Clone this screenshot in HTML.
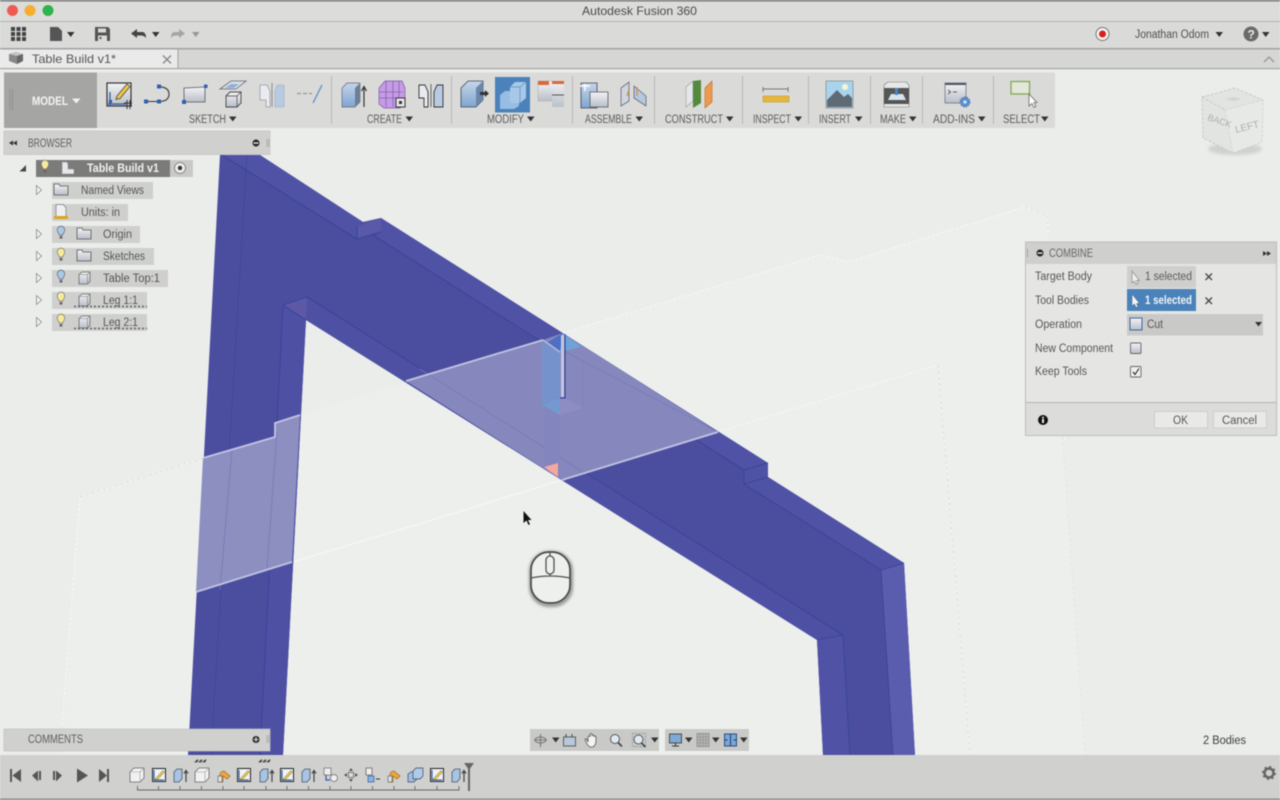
<!DOCTYPE html>
<html><head><meta charset="utf-8"><title>Autodesk Fusion 360</title>
<style>
html,body{margin:0;padding:0;background:#ebedeb;width:1280px;height:800px;overflow:hidden}
svg{display:block;filter:blur(.5px)}
text{font-family:"Liberation Sans","DejaVu Sans",sans-serif;font-size:11.5px;fill:#555}
.l{font-size:11.5px;fill:#5a5a5a}
</style></head><body>
<svg xmlns="http://www.w3.org/2000/svg" width="1280" height="800" viewBox="0 0 1280 800">
<defs>
<filter id="bl" x="-30%" y="-30%" width="160%" height="160%"><feGaussianBlur stdDeviation="1.500"/></filter>
<linearGradient id="gb" x1="0" y1="0" x2="0" y2="1"><stop offset="0" stop-color="#c5d6ea"/><stop offset="1" stop-color="#7fa5d0"/></linearGradient>
<linearGradient id="gg" x1="0" y1="0" x2="0" y2="1"><stop offset="0" stop-color="#f2f3f4"/><stop offset="1" stop-color="#b9bfc9"/></linearGradient>
<g id="ty"><path d="M-3.5,-2a3.7,3.7 0 1 1 7,0c0,1.6-1.6,2.4-1.8,4h-3.4c-.2-1.6-1.8-2.4-1.8-4z" transform="translate(0,-1)" fill="#f7eb9a" stroke="#777" stroke-width=".7"/><rect x="-1.4" y="2" width="2.8" height="2.6" fill="#666"/></g>
<g id="tb"><path d="M-3.5,-2a3.7,3.7 0 1 1 7,0c0,1.6-1.6,2.4-1.8,4h-3.4c-.2-1.6-1.8-2.4-1.8-4z" transform="translate(0,-1)" fill="#a9c9e8" stroke="#667" stroke-width=".7"/><rect x="-1.4" y="2" width="2.8" height="2.6" fill="#666"/></g>
<path id="tri" d="M0,0h7.5l-3.75,5z" fill="#333"/>
<path id="tro" d="M-2.5,-4.5L2.5,0L-2.5,4.5z" fill="#f3f3f3" stroke="#888" stroke-width=".8"/>
<g id="fold"><path d="M0,1h5l1,2h8v9H0z" fill="url(#gg)" stroke="#555" stroke-width=".8"/></g>
<g id="cub"><path d="M1,3.5L4,1h8v9.5L9.500,13H1z" fill="url(#gg)" stroke="#666" stroke-width=".8"/><path d="M1,3.500h8.500V13M9.500,3.500L12,1" fill="none" stroke="#777" stroke-width=".6"/></g>
<g id="tB"><path d="M0,4L4,0H14V10L10,14H0z" fill="#f0f1f1" stroke="#666" stroke-width=".8"/><path d="M0,4H10V14M10,4L14,0" fill="none" stroke="#999" stroke-width=".6"/></g>
<g id="tS"><rect x=".5" y=".5" width="13" height="13" fill="#eef1f5" stroke="#222" stroke-width="1"/><path d="M3,11L11,2.500l1.500,1.500L5,12z" fill="#f0c53c" stroke="#444" stroke-width=".4"/><path d="M2,2V12H12" fill="none" stroke="#1f4f96" stroke-width="1"/></g>
<g id="tE"><path d="M1,4L4,1H9V10.500L6,14H1z" fill="#a8c3e3" stroke="#456" stroke-width=".8"/><path d="M13,14V3M11,5.500L13,2.500L15,5.500" fill="none" stroke="#444" stroke-width="1.200"/></g>
<g id="tH"><path d="M3,14V7a4,4 0 0 1 4-4l6,5-3,3-4-3v6z" fill="#eda542" stroke="#a06a1c" stroke-width=".7"/><path d="M1,14V8h4v6z" fill="#dfe3e8" stroke="#666" stroke-width=".7"/></g>
</defs>

<rect width="1280" height="800" fill="#ebedeb"/>

<!-- planes -->
<path d="M80,497L275,437V423L300,415L565,333L820,255L848,262L1025,207L1047,215L1085,755H62z" fill="#edefed"/>
<g fill="none" stroke="#f6f7f6" stroke-width="1.200" stroke-dasharray="3 2">
<path d="M62,725L80,497L204,458"/><path d="M563,333L820,255L848,262L1025,207L1047,215L1065,440"/><path d="M718,432L938,365L970,755"/>
</g>
<path d="M1047,215L1085,755" stroke="#e3e5e3" stroke-width="1" fill="none" stroke-dasharray="3 3"/>
<path d="M938,365L970,755" stroke="#dcdedc" stroke-width="1" fill="none" stroke-dasharray="3 3"/>
<path d="M80,497L204,458M1025,207L1047,215" stroke="#dfe1df" stroke-width="1" fill="none" stroke-dasharray="3 3"/>
<path d="M293,562L406,528L562,480" stroke="#f5f6f5" stroke-width="1.500" fill="none"/>

<!-- body -->
<path d="M220,155H260L363,222L381,218L768,463V477L904,563L915,755H823L817,640L306,320L283,755H188z" fill="#4b4e9f"/>
<path d="M222,155H260L363,222L357,226V239z" fill="#5053a5"/>
<path d="M381,218L768,463L744,470L373,235L363,222z" fill="#5053a5"/>
<path d="M357,226L381,218V232L357,239z" fill="#5a58a8"/>
<path d="M744,470L768,463V477L744,484z" fill="#5053a5"/>
<path d="M768,477L904,563L881,570L744,484z" fill="#5053a5"/>
<path d="M881,570L904,563L915,755H893z" fill="#5a5dae"/>
<path d="M817,640L843,635L850,755H823z" fill="#5053a5"/>
<path d="M283,305L307,297L306,320z" fill="#5d58a6"/>
<path d="M283,305L306,320L283,755H260z" fill="#4e51a3"/>
<path d="M307,297L843,635L817,640L306,320z" fill="#4e51a3"/>
<g fill="none" stroke="#2f3f98" stroke-width=".8" stroke-opacity=".85">
<path d="M222,155L357,239V226M357,239L381,232L373,235L744,470V484L768,477M744,484L881,570L904,563M881,570L893,755M744,470L768,463"/>
<path d="M283,305L307,297L843,635L817,640M843,635L850,755M283,305L306,320M283,305L260,755"/>
<path d="M247,155L211,755" stroke-opacity=".45"/>
</g>

<!-- translucent plane over body -->
<path d="M203,458L275,437V423L300,415L292,562L196,592z" fill="#8d8fc1"/>
<path d="M406,381L543,340L563,333L718,432L562,480z" fill="#8688bd"/>
<path d="M232,450L220,590M277,432L267,568" stroke="#7579b4" stroke-width=".8" fill="none"/>
<path d="M420,369L583,472M543,340L718,432" stroke="#767ab4" stroke-width=".8" fill="none"/>
<!-- centre details -->
<path d="M542,341L560,352V478L544,467V405z" fill="#8385bf"/>
<path d="M542,341L560,352V405L542,405z" fill="#7692cc"/>
<path d="M548,342L563,333V352L560,352z" fill="#4d70c2"/>
<path d="M563,333L581,347L560,352z" fill="#6ea2d9"/>
<path d="M542,405L560,415V398L565,398L583,408L560,415z" fill="#8f8cc2"/>
<path d="M542,405L560,398V415z" fill="#7498d0"/>
<path d="M565,334V398H560" fill="none" stroke="#2c3b8e" stroke-width="1"/>
<rect x="561" y="335" width="3" height="62" fill="#c4c6e2"/>
<path d="M544,467L558,463V477z" fill="#f4a99c"/>
<path d="M583,362V408" stroke="#7c80ba" stroke-width=".7"/>
<g fill="none" stroke="#c3c4e2" stroke-width="1.800">
<path d="M203,458L275,437V423L300,415"/><path d="M406,381L543,340"/><path d="M543,340L560,352" stroke-width="1.200"/>
<path d="M196,592L292,562"/><path d="M562,480L718,432"/>
</g>

<!-- cursor -->
<path d="M523.500,511V523L526.500,520.500L528.500,525L530,524.300L528,520H531.500z" fill="#111"/>
<!-- mouse -->
<g>
<rect x="531" y="553" width="40" height="52" rx="18" fill="none" stroke="#777" stroke-width="3" filter="url(#bl)"/>
<rect x="531" y="552" width="39" height="51" rx="18" fill="#eef0ee" stroke="#4a4a4a" stroke-width="1.700"/>
<path d="M531,578Q550,574 570,578M550,552V556M550,574V576" stroke="#4f4f4f" stroke-width="1.300" fill="none"/>
<rect x="546" y="556" width="8" height="18" rx="4" fill="#eef0ee" stroke="#4f4f4f" stroke-width="1.300"/>
</g>

<!-- title bar -->
<rect width="1280" height="21" fill="#dcdcdb"/>
<rect width="1280" height="1.500" fill="#777"/>
<rect y="21" width="1280" height="1" fill="#b2b2b0"/>
<circle cx="12.500" cy="10.500" r="5.500" fill="#ee5a50"/><circle cx="30" cy="10.500" r="5.500" fill="#f5ae2d"/><circle cx="48" cy="10.500" r="5.500" fill="#2eb44c"/>
<text x="582" y="15" textLength="115" lengthAdjust="spacingAndGlyphs" style="font-size:12px;fill:#4a4a4a">Autodesk Fusion 360</text>

<!-- toolbar -->
<rect y="22" width="1280" height="26" fill="#dadad9"/>
<rect y="48" width="1280" height="1.500" fill="#a3a3a1"/>
<path d="M11,27h4v4h-4zM16.500,27h4v4h-4zM22,27h4v4h-4zM11,32h4v4h-4zM16.500,32h4v4h-4zM22,32h4v4h-4zM11,37h4v4h-4zM16.500,37h4v4h-4zM22,37h4v4h-4z" fill="#444"/>
<path d="M50,27h8l4,4v10H50z" fill="#555"/>
<use href="#tri" x="67" y="32"/>
<path d="M95,27h13l2,2v12H95z" fill="#555"/><rect x="98" y="28.500" width="8" height="4" fill="#dadad9"/><rect x="98" y="35.500" width="9" height="5.500" fill="#dadad9"/><rect x="99.500" y="37" width="2" height="2" fill="#555"/>
<path d="M131,33.500L137,29V32H142Q146,32 146,38Q144,35.500 141,35.500H137V38z" fill="#444"/>
<use href="#tri" x="152" y="32"/>
<path d="M185,33.500L179,29V32H175Q171,32 171,38Q173,35.500 176,35.500H179V38z" fill="#a5a5a5"/>
<use href="#tri" x="192" y="32" opacity=".4"/>
<circle cx="1102.500" cy="34" r="6.500" fill="#f4f4f4" stroke="#777"/><circle cx="1102.500" cy="34" r="3.500" fill="#d8201a"/>
<text x="1135" y="38" textLength="74" lengthAdjust="spacingAndGlyphs" style="fill:#505050">Jonathan Odom</text>
<use href="#tri" x="1215.500" y="32"/>
<circle cx="1251" cy="34" r="7.500" fill="#6a6a6a"/><text x="1247.500" y="38.500" style="font-size:12px;font-weight:bold;fill:#eee">?</text>
<use href="#tri" x="1262" y="32"/>

<!-- tab bar -->
<rect y="49.500" width="1280" height="19" fill="#d6d7d5"/>
<rect y="49.500" width="177.500" height="19" fill="#e9eae9"/>
<rect x="177.500" y="49.500" width="1" height="19" fill="#9f9f9d"/>
<rect y="68" width="1280" height="1.200" fill="#a6a6a4"/>
<path d="M9,54l7-2 7,2v7l-6,3-8-3z" fill="#888"/><path d="M9,54l8,2 6-2-7-2z" fill="#c4c4c4"/><path d="M17,56v8l6-3v-7z" fill="#666"/>
<text x="32" y="63" textLength="84" lengthAdjust="spacingAndGlyphs" style="font-size:12px;fill:#555">Table Build v1*</text>
<path d="M163,55.500l8,8m0-8l-8,8" stroke="#888" stroke-width="1.400"/>
<path d="M1264,62l5-5 5,5" fill="none" stroke="#9a9a9a" stroke-width="1.500"/>

<!-- ribbon -->
<rect x="4" y="72.500" width="1051" height="55.500" fill="#dadbd9"/>
<rect x="4" y="72.500" width="93" height="55.500" fill="#a5a5a3"/>
<path d="M10,89V110M12.500,89V110" stroke="#8d8d8b" stroke-width=".8"/>
<text x="32" y="105" textLength="36" lengthAdjust="spacingAndGlyphs" style="font-weight:bold;font-size:11.500px;fill:#f4f4f4">MODEL</text>
<path d="M72,98.500h8.500l-4.250,5z" fill="#f0f0f0"/>
<g stroke="#b9b9b7" stroke-width="1"><path d="M331.500,76V124M451.500,76V124M572.500,76V124M654.500,76V124M742.500,76V124M808.500,76V124M870.500,76V124M922.500,76V124M993.500,76V124"/></g>

<!-- sketch icons -->
<rect x="107" y="83" width="24" height="23" fill="url(#gg)" stroke="#333" stroke-width="1.200"/>
<path d="M108,104H126M110,92V105" stroke="#2c5aa0" stroke-width="1.200"/><rect x="109" y="100" width="3" height="3" fill="#2c5aa0"/>
<path d="M117,96L127,84l3,2.500-10,12-4,1z" fill="#f2c648" stroke="#444" stroke-width=".8"/>
<path d="M124,103h8M124,106h8M127,100v9M130,100v9" stroke="#333" stroke-width="1"/>
<path d="M147,101.500H158" stroke="#333" stroke-width="1"/><path d="M158,86.500Q169,87 169,94Q169,101 160,101.500" fill="none" stroke="#444" stroke-width="1.200"/>
<path d="M144,99.500h4v4h-4zM157,84.500h4v4h-4zM157,99.500h4v4h-4z" fill="#2d60b0"/>
<path d="M184,88L205,87V102H184z" fill="url(#gg)" stroke="#555" stroke-width=".8"/>
<path d="M182,100h4v4h-4zM204,84.500h3.500v3.500h-3.500z" fill="#2d60b0"/>
<path d="M220,89L231,81H246L236,89z" fill="#d5e0ee" stroke="#666" stroke-width=".8"/><path d="M225,88L231,84H239L234,88z" fill="#8fb0d8"/>
<path d="M226,96L230,92H241V103L237,107H226z" fill="url(#gg)" stroke="#444" stroke-width=".9"/><path d="M226,96H237V107M237,96L241,92" fill="none" stroke="#444" stroke-width=".7"/>
<path d="M260,85H267L270,91V107H266V100H260z" fill="#e8ebf0" stroke="#9a9a9a" stroke-width=".8"/><path d="M272,83V107" stroke="#888"/><path d="M284,85H277L275,91V107H284z" fill="#b6cbe2" stroke="#9ab" stroke-width=".6"/>
<path d="M297,93.500H312" stroke="#a0a0a0" stroke-width="1.400" stroke-dasharray="4 2"/><path d="M313,103L322,85" stroke="#6d96c8" stroke-width="1.400"/>
<text class="l" x="189" y="123" textLength="37" lengthAdjust="spacingAndGlyphs">SKETCH</text><use href="#tri" x="229" y="116.500"/>

<!-- create -->
<path d="M342,88L347,83H360V102L355,107H342z" fill="url(#gb)" stroke="#667" stroke-width=".7"/><path d="M355,88V107L360,102V83z" fill="#6c7f95"/>
<path d="M364,107V88M361.500,91L364,86.500L366.500,91" fill="none" stroke="#333" stroke-width="1.200"/>
<path d="M379,88L385,81H402L405,88V104L400,108H384L379,104z" fill="#c59be6" stroke="#7a5aa0" stroke-width=".7"/>
<path d="M379,92H403M379,98H403M386,81V107M393,81V107M399,81V107" stroke="#6d4f96" stroke-width=".6"/>
<rect x="396" y="98" width="9" height="9" fill="#e8e8e8" stroke="#333"/><path d="M399,101h3v3h-3z" fill="#333"/>
<path d="M419,85H425L428,92V107H424V98H419z" fill="#e8ebf0" stroke="#333" stroke-width=".9"/><path d="M431,84V107" stroke="#666"/>
<path d="M443,85H437L434,92V107H443z" fill="#b6cbe2" stroke="#333" stroke-width=".9"/>
<text class="l" x="367" y="123" textLength="35" lengthAdjust="spacingAndGlyphs">CREATE</text><use href="#tri" x="405.500" y="116.500"/>

<!-- modify -->
<path d="M461,88L468,81H483V100L476,107H461z" fill="url(#gb)" stroke="#445" stroke-width=".8"/><path d="M476,88V107L483,100V81z" fill="#6b86ab"/>
<path d="M480,92h5v-2l4,3.500-4,3.500v-2h-5z" fill="#333"/>
<rect x="495" y="77" width="35" height="35.500" fill="#4a82b9"/>
<path d="M500,95L505,91H513V97H519V106L514,109H500z" fill="#98bde2"/><path d="M510,87L515,82H526V98L520,103H510z" fill="#a8c8e8"/>
<path d="M510,87H520V103M520,87L526,82" stroke="#5f8dbf" stroke-width=".7" fill="none"/>
<path d="M538,81H553V101H538z" fill="url(#gg)" stroke="#aaa" stroke-width=".5"/><rect x="538" y="81" width="11" height="4" fill="#d9693a"/>
<path d="M552,81H564V107H552z" fill="url(#gg)" opacity=".9"/><rect x="552" y="81" width="12" height="3" fill="#d9693a"/><path d="M552,95H564" stroke="#555"/>
<text class="l" x="487" y="123" textLength="37" lengthAdjust="spacingAndGlyphs">MODIFY</text><use href="#tri" x="527" y="116.500"/>

<!-- assemble -->
<path d="M581,83H597V108H581z" fill="url(#gb)" stroke="#445" stroke-width=".8"/><path d="M590,92H608V107H590z" fill="url(#gg)" stroke="#555" stroke-width=".8"/><path d="M580,86h10M585,84v7" stroke="#fff" stroke-width="1.500"/>
<path d="M621,88L629,82V101L621,106z" fill="#cfd6de" stroke="#667" stroke-width=".8"/><path d="M634,86L646,96V106L634,98z" fill="#b4c8de" stroke="#667" stroke-width=".8"/><path d="M629,90l-2,6M637,87v9" stroke="#d78a3a" stroke-width="1.200"/>
<text class="l" x="585" y="123" textLength="47" lengthAdjust="spacingAndGlyphs">ASSEMBLE</text><use href="#tri" x="635.500" y="116.500"/>

<!-- construct -->
<path d="M686,87L693,81V101L686,107z" fill="#e3e6ea" stroke="#999" stroke-width=".6"/><path d="M693,81L701,80V103L693,108z" fill="#538a3d"/>
<path d="M705,88L712,81V102L705,108z" fill="#ee9a4d" stroke="#c06a22" stroke-width=".6"/>
<text class="l" x="665" y="123" textLength="58" lengthAdjust="spacingAndGlyphs">CONSTRUCT</text><use href="#tri" x="726" y="116.500"/>

<!-- inspect -->
<path d="M763,89H788M763,87V92M788,87V92" stroke="#777" stroke-width="1"/>
<rect x="763" y="96" width="26" height="6" fill="#e6b73c" stroke="#b98d20" stroke-width=".5"/>
<text class="l" x="753" y="123" textLength="38" lengthAdjust="spacingAndGlyphs">INSPECT</text><use href="#tri" x="794.500" y="116.500"/>

<!-- insert -->
<rect x="826" y="81" width="27" height="27" fill="#a9d4ee" stroke="#777" stroke-width=".6"/><circle cx="845" cy="87" r="3" fill="#f8f4d0"/>
<path d="M827,107V100L837,90L844,97L848,94L852,98V107z" fill="#5e6a75"/>
<text class="l" x="819" y="123" textLength="32" lengthAdjust="spacingAndGlyphs">INSERT</text><use href="#tri" x="855" y="116.500"/>

<!-- make -->
<path d="M884,85L888,82H906L909,85V107H884z" fill="#e6e7e6" stroke="#777" stroke-width=".6"/><rect x="884" y="88" width="25" height="16" fill="#555"/>
<path d="M888,100H906L903,94H891z" fill="#d8e3ef"/><path d="M895,88h3v7h-3z" fill="#4a82c8"/>
<text class="l" x="880" y="123" textLength="26" lengthAdjust="spacingAndGlyphs">MAKE</text><use href="#tri" x="909" y="116.500"/>

<!-- add-ins -->
<rect x="945" y="83" width="21" height="20" fill="url(#gg)" stroke="#667" stroke-width=".7"/><rect x="945" y="83" width="21" height="2" fill="#556"/>
<path d="M948,90l2.500,2-2.500,2M953,92h4" stroke="#333" stroke-width=".8" fill="none"/>
<circle cx="965" cy="102" r="4.500" fill="#5f92d0" stroke="#4a78b8" stroke-width="2" stroke-dasharray="1.500 1"/><circle cx="965" cy="102" r="1.500" fill="#e6eef6"/>
<text class="l" x="933" y="123" textLength="42" lengthAdjust="spacingAndGlyphs">ADD-INS</text><use href="#tri" x="978" y="116.500"/>

<!-- select -->
<rect x="1011" y="81.500" width="18.500" height="12.500" fill="#e3e6da" stroke="#83a94f" stroke-width="1.300"/>
<path d="M1029,94V106L1032,103.500L1034,107.500L1036,106.500L1034,102.500H1037z" fill="#fff" stroke="#666" stroke-width=".8"/>
<text class="l" x="1003" y="123" textLength="37" lengthAdjust="spacingAndGlyphs">SELECT</text><use href="#tri" x="1041" y="116.500"/>

<!-- view cube -->
<ellipse cx="1235" cy="149" rx="27" ry="6" fill="#c4c6c4" opacity=".7" filter="url(#bl)"/>
<path d="M1202,97L1235,88L1263,100L1262,142L1233,153L1203,138z" fill="#e2e4e2"/>
<path d="M1202,97L1235,88L1263,100L1262,142L1233,153L1203,138zM1202,97L1225,110L1263,100M1225,110L1233,153" fill="none" stroke="#c6c8c6" stroke-width=".9" stroke-dasharray="3 1.500"/>
<path d="M1225,110L1263,100L1262,142L1233,153z" fill="#e9ebe9" opacity=".7"/>
<text transform="translate(1207,120) rotate(18)" style="font-size:9px;fill:#adafad">BACK</text>
<text transform="translate(1236,133) rotate(-14)" style="font-size:10px;fill:#adafad">LEFT</text>
<path d="M1226,99l8-2 7,2-8,2z" fill="#d2d4d2"/>

<!-- browser -->
<rect x="4" y="131" width="266" height="23.500" fill="#d0d1cf"/>
<rect x="4" y="131" width="266" height="23.500" fill="none" stroke="#c0c1bf" stroke-width=".7"/>
<path d="M9,143l4-2.500v5zM13,143l4-2.500v5z" fill="#333"/>
<text x="28" y="147" textLength="44" lengthAdjust="spacingAndGlyphs" style="fill:#5e5e5e">BROWSER</text>
<circle cx="256" cy="143" r="3.500" fill="#222"/><rect x="253.500" y="142.300" width="5" height="1.500" fill="#ddd"/>
<path d="M267,139V147M268.800,139V147" stroke="#999" stroke-width=".7"/>

<path d="M19.500,171.500H26V165z" fill="#444"/>
<rect x="36" y="160" width="157" height="17" fill="#c9cac8"/>
<rect x="36" y="160" width="134" height="17" fill="#7b7b79"/>
<use href="#ty" x="45" y="168"/>
<path d="M62,162h5l1,2v5h6v5H62z" fill="#e5e7ea" stroke="#888" stroke-width=".5"/>
<text x="87" y="172" textLength="72" lengthAdjust="spacingAndGlyphs" style="font-weight:bold;fill:#f2f2f2">Table Build v1</text>
<circle cx="180" cy="168" r="5.500" fill="#eee" stroke="#777" stroke-width=".8"/><circle cx="180" cy="168" r="2.200" fill="#333"/>

<use href="#tro" x="39" y="190"/>
<rect x="52" y="182" width="101" height="17" fill="#cfd0ce"/>
<use href="#fold" x="54" y="183"/>
<text x="81" y="194" textLength="63" lengthAdjust="spacingAndGlyphs">Named Views</text>

<rect x="52" y="204" width="76" height="17" fill="#cfd0ce"/>
<path d="M56,204.500h7l3,3v9H56z" fill="#eef0f2" stroke="#777" stroke-width=".7"/><rect x="54" y="216" width="14" height="3" fill="#dba526"/>
<text x="81" y="216" textLength="39" lengthAdjust="spacingAndGlyphs">Units: in</text>

<use href="#tro" x="39" y="234"/>
<rect x="52" y="226" width="88" height="17" fill="#cfd0ce"/>
<use href="#tb" x="61" y="234"/><use href="#fold" x="77" y="227"/>
<text x="103" y="238" textLength="29" lengthAdjust="spacingAndGlyphs">Origin</text>

<use href="#tro" x="39" y="256"/>
<rect x="52" y="248" width="102" height="17" fill="#cfd0ce"/>
<use href="#ty" x="61" y="256"/><use href="#fold" x="77" y="249"/>
<text x="103" y="260" textLength="42" lengthAdjust="spacingAndGlyphs">Sketches</text>

<use href="#tro" x="39" y="278"/>
<rect x="52" y="270" width="116" height="17" fill="#cfd0ce"/>
<use href="#tb" x="61" y="278"/><use href="#cub" x="78" y="271"/>
<text x="103" y="282" textLength="57" lengthAdjust="spacingAndGlyphs">Table Top:1</text>

<use href="#tro" x="39" y="300"/>
<rect x="52" y="292" width="95" height="17" fill="#cfd0ce"/>
<use href="#ty" x="61" y="300"/><use href="#cub" x="78" y="293"/>
<text x="103" y="304" textLength="35" lengthAdjust="spacingAndGlyphs">Leg 1:1</text>
<path d="M74,306.500H147" stroke="#666" stroke-width="1.800" stroke-dasharray="2 2"/>

<use href="#tro" x="39" y="322"/>
<rect x="52" y="314" width="95" height="17" fill="#cfd0ce"/>
<use href="#ty" x="61" y="322"/><use href="#cub" x="78" y="315"/>
<text x="103" y="326" textLength="35" lengthAdjust="spacingAndGlyphs">Leg 2:1</text>
<path d="M74,328.500H147" stroke="#666" stroke-width="1.800" stroke-dasharray="2 2"/>

<!-- combine panel -->
<rect x="1025.500" y="242" width="251" height="193.500" fill="#e5e6e4" stroke="#bdbebc"/>
<rect x="1026" y="242.500" width="250" height="21.500" fill="#cfd0ce"/>
<rect x="1026" y="403" width="250" height="32" fill="#dcdddb"/>
<path d="M1026,402.500H1276" stroke="#b4b5b3"/>
<path d="M1027.500,249V257" stroke="#999" stroke-width=".8"/>
<circle cx="1040" cy="253" r="3.500" fill="#222"/><rect x="1037.500" y="252.300" width="5" height="1.500" fill="#ddd"/>
<text x="1049" y="257" textLength="44" lengthAdjust="spacingAndGlyphs" style="fill:#666">COMBINE</text>
<path d="M1263,251l4,2.500-4,2.500zM1267,251l4,2.500-4,2.500z" fill="#333"/>
<text x="1035" y="280" textLength="57" lengthAdjust="spacingAndGlyphs">Target Body</text>
<text x="1035" y="304" textLength="54" lengthAdjust="spacingAndGlyphs">Tool Bodies</text>
<text x="1035" y="328" textLength="47" lengthAdjust="spacingAndGlyphs">Operation</text>
<text x="1035" y="352" textLength="78" lengthAdjust="spacingAndGlyphs">New Component</text>
<text x="1035" y="375" textLength="52" lengthAdjust="spacingAndGlyphs">Keep Tools</text>
<rect x="1127" y="266" width="69" height="22" fill="#cfd0ce"/>
<path d="M1132,271V283L1134.500,281L1136,284.500L1138,283.500L1136.500,280.500H1139.500z" fill="#eee" stroke="#888" stroke-width=".7"/>
<text x="1145" y="280" textLength="47" lengthAdjust="spacingAndGlyphs" style="fill:#5a5a5a">1 selected</text>
<path d="M1205.500,273.500l6.500,6.500m0-6.500l-6.500,6.500" stroke="#444" stroke-width="1.300"/>
<rect x="1127" y="289" width="69" height="22" fill="#4a82b9"/>
<path d="M1132,294V306L1134.500,304L1136,307.500L1138,306.500L1136.500,303.500H1139.500z" fill="#f4f4f4" stroke="#3a5f88" stroke-width=".5"/>
<text x="1145" y="304" textLength="47" lengthAdjust="spacingAndGlyphs" style="fill:#f3f6f9;font-weight:bold">1 selected</text>
<path d="M1205.500,297.500l6.500,6.500m0-6.500l-6.500,6.500" stroke="#444" stroke-width="1.300"/>
<rect x="1127" y="314" width="136" height="21.500" fill="#c9cac8"/>
<rect x="1130" y="318" width="12" height="12" fill="url(#gg)" stroke="#2d5a9a" stroke-width=".9"/>
<text x="1147" y="328" textLength="16" lengthAdjust="spacingAndGlyphs" style="fill:#555">Cut</text>
<path d="M1255,322h7l-3.500,4.500z" fill="#333"/>
<rect x="1130.500" y="343" width="10.500" height="10.500" rx="1" fill="url(#gg)" stroke="#666" stroke-width=".9"/>
<rect x="1130.500" y="366.500" width="10.500" height="10.500" rx="1" fill="#eef0f2" stroke="#666" stroke-width=".9"/>
<path d="M1133,372l2,2.500 4-6" fill="none" stroke="#222" stroke-width="1.100"/>
<circle cx="1043" cy="420" r="5" fill="#111"/><rect x="1042" y="419" width="2" height="4" fill="#eee"/><rect x="1042" y="416.800" width="2" height="1.500" fill="#eee"/>
<rect x="1154.500" y="411.500" width="53" height="16.500" fill="#e9eae8" stroke="#c4c5c3" stroke-width=".7"/>
<text x="1173" y="424" textLength="15" lengthAdjust="spacingAndGlyphs">OK</text>
<rect x="1213.500" y="411.500" width="53" height="16.500" fill="#e9eae8" stroke="#c4c5c3" stroke-width=".7"/>
<text x="1222" y="424" textLength="35" lengthAdjust="spacingAndGlyphs">Cancel</text>

<!-- comments -->
<rect x="4" y="729" width="266" height="22" fill="#d0d1cf" stroke="#c0c1bf" stroke-width=".7"/>
<text x="28" y="743" textLength="55" lengthAdjust="spacingAndGlyphs" style="fill:#5e5e5e">COMMENTS</text>
<circle cx="256" cy="739.500" r="3.500" fill="#222"/><path d="M253.500,739.500h5M256,737v5" stroke="#ddd" stroke-width="1.100"/>
<path d="M267,735V743M268.800,735V743" stroke="#999" stroke-width=".7"/>

<!-- nav bar -->
<rect x="530" y="729" width="129" height="22" fill="#c9cac8"/>
<rect x="665" y="729" width="84" height="22" fill="#c9cac8"/>
<path d="M534,740h13M540.500,734v13" stroke="#777" stroke-width="1.100"/><ellipse cx="540.500" cy="740" rx="5.500" ry="3" fill="none" stroke="#777"/>
<use href="#tri" x="552" y="737.500"/>
<rect x="563.500" y="737" width="12" height="9" fill="#b8c8da" stroke="#444" stroke-width=".8"/><path d="M566,737v-3M572,737v-3" stroke="#444"/>
<path d="M588,742V737a1,1 0 0 1 2,0V734.500a1,1 0 0 1 2,0V736a1,1 0 0 1 2,0v1a1,1 0 0 1 2,0V742q-1,5-4,5h-2q-2,-1-4,-5-2,-4 .5,-3z" fill="#f3f3f3" stroke="#555" stroke-width=".8"/>
<circle cx="615" cy="739" r="4.500" fill="#dfe9f2" stroke="#555"/><path d="M618,742.500l4,4" stroke="#444" stroke-width="1.600"/>
<rect x="632.500" y="733.500" width="13" height="13" fill="none" stroke="#888" stroke-width=".7" stroke-dasharray="2 1"/><circle cx="638.500" cy="739.500" r="4.500" fill="#dfe9f2" stroke="#555"/><path d="M641.500,743l4,4" stroke="#444" stroke-width="1.600"/>
<use href="#tri" x="651" y="737.500"/>
<rect x="669.500" y="734" width="12" height="9" fill="#7fa9d6" stroke="#333" stroke-width=".8"/><path d="M672,746h7M675.500,743v3" stroke="#333"/>
<use href="#tri" x="685" y="737.500"/>
<rect x="697" y="733.500" width="12" height="13" fill="#b5b6b4" stroke="#777" stroke-width=".6"/><path d="M697,737h12M697,740h12M697,743h12M700,733.500v13M703,733.500v13M706,733.500v13" stroke="#888" stroke-width=".5"/>
<use href="#tri" x="712" y="737.500"/>
<rect x="724.500" y="734" width="12" height="12" fill="#7aa7d8" stroke="#2a4d82"/><path d="M730.500,734v12M724.500,740h3M733.500,740h3" stroke="#1f3c6c"/>
<use href="#tri" x="740" y="737.500"/>

<text x="1203" y="744" textLength="43" lengthAdjust="spacingAndGlyphs" style="fill:#3c3c3c">2 Bodies</text>

<!-- timeline -->
<rect y="755" width="1280" height="45" fill="#d0d1cf"/>
<rect y="798.500" width="1280" height="1.500" fill="#8a8a88"/>
<g fill="#555">
<path d="M10,769h2v13h-2zM21,769v13l-8.500-6.500z"/>
<path d="M32,775.500l6-5v11zM39,771h2v9h-2z"/>
<path d="M60,775.500l-6-5v11zM53,771h-2v9h2z" transform="translate(2,0)"/>
<path d="M77,768.500l11,7-11,7z"/>
<path d="M99,769l8,6.500-8,6.500zM107,769h2v13h-2z"/>
</g>
<g transform="translate(130,768)"><use href="#tB"/></g>
<g transform="translate(152,768)"><use href="#tS"/></g>
<g transform="translate(173,768)"><use href="#tE"/></g>
<g transform="translate(195,768)"><use href="#tB"/></g>
<g transform="translate(217,768)"><use href="#tH"/></g>
<g transform="translate(237,768)"><use href="#tS"/></g>
<g transform="translate(259,768)"><use href="#tE"/></g>
<g transform="translate(280,768)"><use href="#tS"/></g>
<g transform="translate(301,768)"><use href="#tE"/></g>
<g transform="translate(323,768)"><rect x="1" y="0" width="7" height="7" fill="#eee" stroke="#666" stroke-width=".7"/><circle cx="11" cy="10" r="3.500" fill="#eee" stroke="#666" stroke-width=".7"/><path d="M3,7v5h4" stroke="#2d60b0" stroke-width="1.200" fill="none"/></g>
<g transform="translate(344,768)" fill="#555"><rect x="4.500" y="4.500" width="5" height="5" fill="#ddd" stroke="#555" stroke-width=".7"/><path d="M7,0l2,3h-4zM7,14l2-3h-4zM0,7l3,2v-4zM14,7l-3,2v-4z"/></g>
<g transform="translate(365,768)"><rect x="1" y="0" width="6" height="7" fill="#eee" stroke="#555" stroke-width=".7"/><rect x="3" y="8" width="6" height="6" fill="#8db2dc" stroke="#2d60b0" stroke-width=".7"/><path d="M15,11h-4" stroke="#333"/></g>
<g transform="translate(387,768)"><use href="#tH"/></g>
<g transform="translate(408,768)"><path d="M0,6l3-2h6v7l-3,3H0z" fill="#9cc0e6" stroke="#445" stroke-width=".7"/><path d="M5,3l3-3h7v8l-3,3H5z" fill="#aecbea" stroke="#445" stroke-width=".7"/></g>
<g transform="translate(430,768)"><use href="#tS"/></g>
<g transform="translate(451,768)"><use href="#tE"/></g>
<path d="M137.500,788.500V790H459V788.500" fill="none" stroke="#666" stroke-width="1"/>
<path d="M137.500,786V790M158.500,786V790M180,786V790M201.500,786V790M223,786V790M244,786V790M266,786V790M287,786V790M308.500,786V790M330,786V790M351,786V790M372.500,786V790M394,786V790M415,786V790M437,786V790M459,786V790" stroke="#666" stroke-width=".9"/>
<path d="M195,762l2-2h1l-1,2zM199,762l2-2h1l-1,2zM203,762l2-2h1l-1,2zM259,762l2-2h1l-1,2zM263,762l2-2h1l-1,2zM267,762l2-2h1l-1,2z" fill="#444" stroke="#444" stroke-width=".8"/>
<path d="M464,763h10l-5,7z" fill="#666"/><rect x="468" y="768" width="2" height="23" fill="#666"/>
<g transform="translate(1269,773)"><circle r="4.500" fill="none" stroke="#666" stroke-width="2.500"/><circle r="6" fill="none" stroke="#666" stroke-width="2" stroke-dasharray="2 2.700"/></g>
</svg>
</body></html>
